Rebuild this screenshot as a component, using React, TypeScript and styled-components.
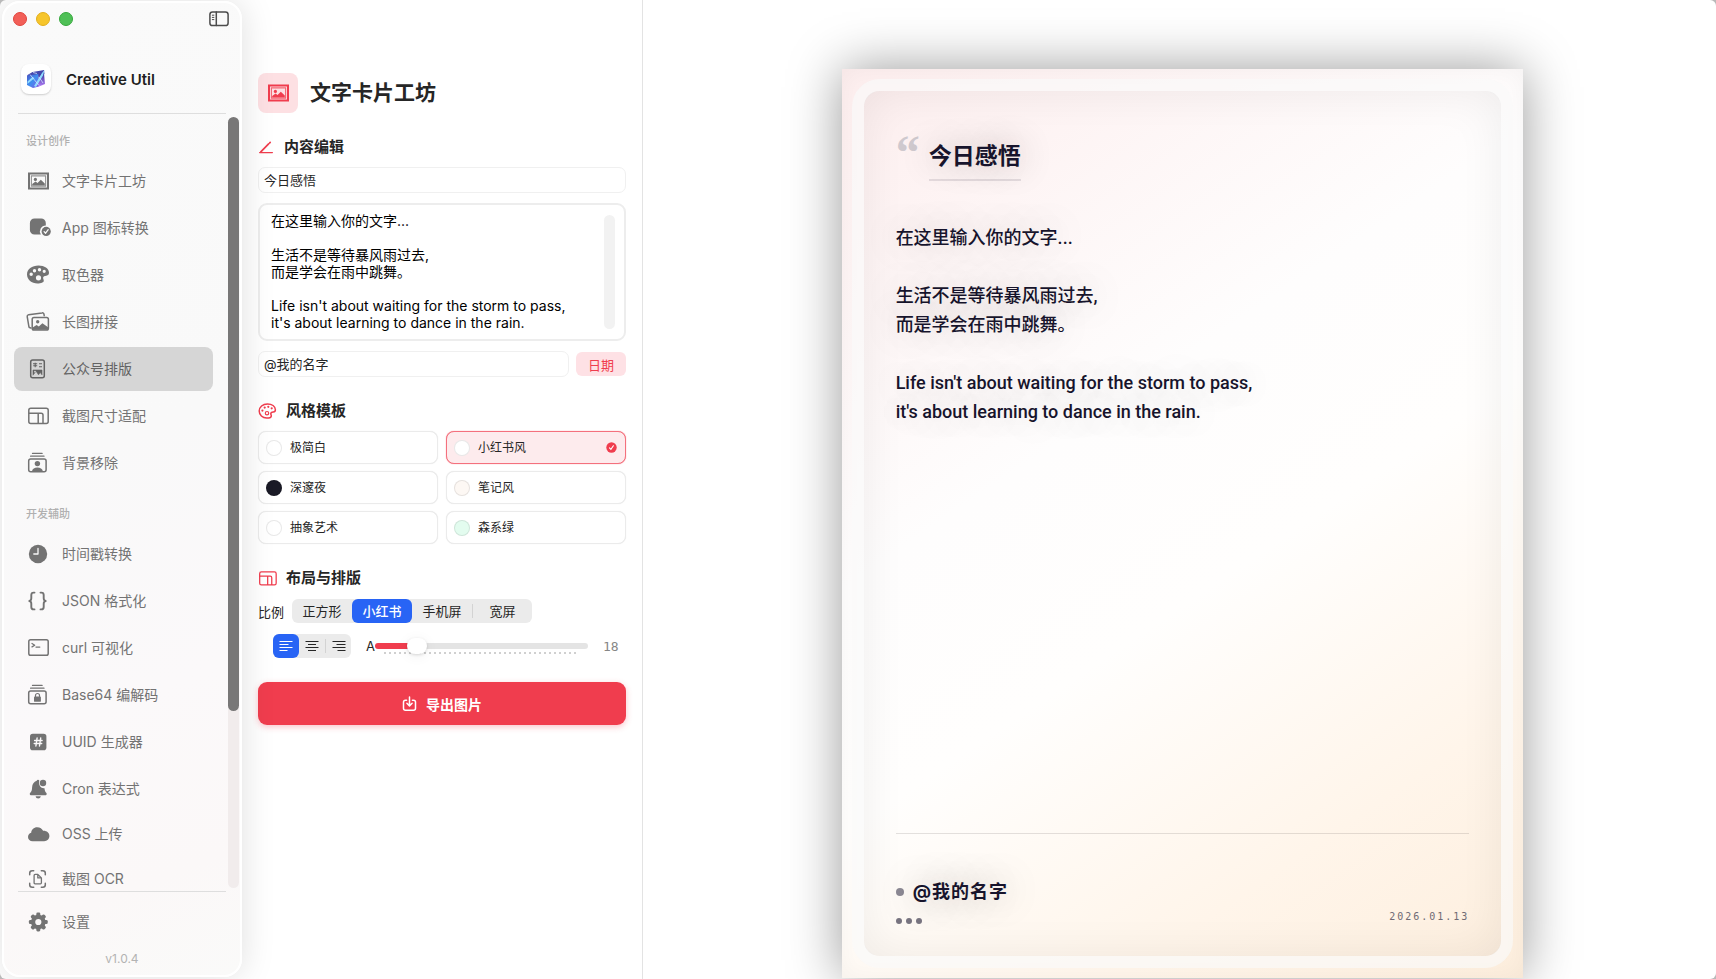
import React, { useState } from "react";
import styled, { createGlobalStyle, css } from "styled-components";

const RED = "#f03d4e";
const BLUE = "#2864f5";
const INK = "#17142c";

const Global = createGlobalStyle`
  * { box-sizing: border-box; }
  html, body, #root { height: 100%; }
  body {
    margin: 0;
    background: #b9b9b9;
    color: #262626;
    font-family: Inter, "Noto Sans CJK SC", sans-serif;
    font-size: 13px;
    -webkit-font-smoothing: antialiased;
  }
  button, input, textarea { font-family: inherit; color: inherit; margin: 0; }
  button { border: 0; padding: 0; background: none; cursor: pointer; }
  h1, h2, p, ul { margin: 0; padding: 0; }
`;

const Window = styled.div`
  display: flex;
  height: 100vh;
  min-height: 700px;
  background: #fff;
  border-radius: 6px;
  overflow: hidden;
`;

/* ---------- sidebar ---------- */

const Sidebar = styled.aside`
  display: flex;
  flex-direction: column;
  flex: none;
  width: 240px;
  margin: 1px 0 2px 2px;
  border: 2px solid #fff;
  border-radius: 18px;
  background: linear-gradient(160deg, #fafafa 0%, #f9f9f9 45%, #fbf9fa 70%, #fbf8f8 88%, #fafaf9 100%);
  box-shadow: 0 0 34px rgba(0, 0, 0, 0.13);
  z-index: 1;
`;

const TitleBar = styled.div`
  display: flex;
  align-items: center;
  height: 32px;
  padding: 0 11px 0 9px;
  gap: 9px;
`;

const Light = styled.button<{ $fill: string; $edge: string }>`
  width: 14px;
  height: 14px;
  border-radius: 50%;
  background: ${(p) => p.$fill};
  border: 1px solid ${(p) => p.$edge};
`;

const ToggleButton = styled.button`
  display: flex;
  margin-left: auto;
  color: #4c4c4c;
`;

const Brand = styled.div`
  display: flex;
  align-items: center;
  gap: 15px;
  margin: 0 14px;
  padding: 29px 3px 19px;
  border-bottom: 1px solid #dedede;
  font-size: 15px;
  font-weight: 600;
  color: #1f1f1f;
`;

const BrandMark = styled.span`
  display: grid;
  place-items: center;
  width: 30px;
  height: 30px;
  border-radius: 8px;
  background: #fff;
  box-shadow: 0 1px 2px rgba(0, 0, 0, 0.18);
`;

const NavScroll = styled.div`
  display: flex;
  flex: 1;
  min-height: 0;
`;

const NavList = styled.nav`
  display: flex;
  flex-direction: column;
  gap: 21px;
  flex: 1;
  padding: 19px 15px 0 10px;
  overflow: hidden;
`;

const NavGroup = styled.section`
  display: flex;
  flex-direction: column;
  gap: 3px;
  flex: none;
`;

const NavHeading = styled.h2`
  margin: 0 12px 7px;
  font-size: 11px;
  line-height: 16px;
  font-weight: 500;
  color: #b0b0b0;
`;

const NavButton = styled.button<{ $active?: boolean; $short?: boolean }>`
  display: flex;
  align-items: center;
  gap: 13px;
  width: 100%;
  height: ${(p) => (p.$short ? 40 : 44)}px;
  padding: 0 13px;
  border-radius: 8px;
  background: ${(p) => (p.$active ? "#d6d6d6" : "transparent")};
  color: ${(p) => (p.$active ? "#636363" : "#737373")};
  font-size: 14px;
  line-height: 20px;
  white-space: nowrap;
  svg { flex: none; overflow: visible; }
`;

const ScrollTrack = styled.div`
  width: 11px;
  margin: 3px 1px 3px 0;
  border-radius: 6px;
  background: #f1ecec;
`;

const ScrollThumb = styled.div`
  height: 77%;
  border-radius: 6px;
  background: #787777;
`;

const SidebarFooter = styled.div`
  margin: 0 14px;
  padding: 8px 0;
  border-top: 1px solid #dedede;
  ${NavButton} { padding: 0 9px; }
`;

const Version = styled.p`
  margin: 7px 0 0;
  font-size: 12px;
  line-height: 16px;
  text-align: center;
  color: #b3b3b3;
`;

/* ---------- editor ---------- */

const Editor = styled.main`
  display: flex;
  flex-direction: column;
  gap: 24px;
  flex: none;
  width: 401px;
  padding: 73px 16px 0;
  border-right: 1px solid #e3e3e3;
`;

const EditorHeader = styled.header`
  display: flex;
  align-items: center;
  gap: 12px;
  height: 40px;
`;

const HeaderBadge = styled.span`
  display: grid;
  place-items: center;
  width: 40px;
  height: 40px;
  border-radius: 8px;
  background: #fde0e3;
  color: ${RED};
`;

const Title = styled.h1`
  font-size: 21px;
  line-height: 30px;
  font-weight: 700;
`;

const Section = styled.section<{ $gap?: number }>`
  display: flex;
  flex-direction: column;
  gap: ${(p) => p.$gap ?? 10}px;
`;

const SectionTitle = styled.h2`
  display: flex;
  align-items: center;
  gap: 9px;
  font-size: 15px;
  line-height: 20px;
  font-weight: 600;
  svg { color: ${RED}; }
`;

const TextField = styled.input`
  flex: 1;
  min-width: 0;
  min-height: 26px;
  padding: 0 5px;
  border: 1px solid #f0f0f0;
  border-radius: 7px;
  background: #fff;
  font-size: 13px;
  line-height: 20px;
  outline: none;
`;

const AreaFrame = styled.div`
  display: flex;
  height: 138px;
  padding: 7px 9px 7px 11px;
  border: 2px solid #ededed;
  border-radius: 9px;
  background: #fff;
`;

const Area = styled.textarea`
  flex: 1;
  padding: 0;
  border: 0;
  outline: none;
  resize: none;
  overflow: hidden;
  background: none;
  color: #000;
  font-size: 14px;
  line-height: 17px;
`;

const AreaScroll = styled.div`
  width: 11px;
  margin: 3px 0;
  border-radius: 6px;
  background: #f2f2f2;
`;

const FieldRow = styled.div`
  display: flex;
  gap: 7px;
`;

const DateButton = styled.button`
  align-self: center;
  width: 50px;
  height: 24px;
  border-radius: 6px;
  background: #fee1e5;
  color: ${RED};
  font-size: 13px;
`;

const StyleGrid = styled.div`
  display: grid;
  grid-template-columns: 1fr 1fr;
  gap: 7px 8px;
`;

const StyleCard = styled.button<{ $active: boolean }>`
  display: flex;
  align-items: center;
  gap: 8px;
  height: 33px;
  padding: 0 7px;
  border: 1px solid ${(p) => (p.$active ? "#f4707d" : "#ebebeb")};
  box-shadow: 0 0 1px ${(p) => (p.$active ? "#f4707d" : "#e4e4e4")};
  border-radius: 8px;
  background: ${(p) => (p.$active ? "#fdebed" : "#fff")};
  font-size: 12px;
  line-height: 18px;
  svg { margin: 0 1px 0 auto; }
`;

const Swatch = styled.span<{ $color: string }>`
  width: 16px;
  height: 16px;
  border-radius: 50%;
  border: 1px solid rgba(0, 0, 0, 0.09);
  background: ${(p) => p.$color};
`;

const ControlRow = styled.div<{ $indent?: boolean }>`
  display: flex;
  align-items: center;
  gap: ${(p) => (p.$indent ? 15 : 8)}px;
  padding-left: ${(p) => (p.$indent ? 15 : 0)}px;
  font-size: 13px;
`;

const Segmented = styled.div`
  display: flex;
  height: 24px;
  border-radius: 6px;
  background: #ebebeb;
`;

const Segment = styled.button<{ $active: boolean; $narrow?: boolean; $rule?: boolean }>`
  display: flex;
  align-items: center;
  justify-content: center;
  width: ${(p) => (p.$narrow ? 26 : 60)}px;
  border-radius: 6px;
  font-size: 13px;
  line-height: 20px;
  font-weight: 400;
  ${(p) =>
    p.$active &&
    css`
      background: ${BLUE};
      color: #fff;
      font-weight: 500;
    `}
  ${(p) =>
    p.$rule &&
    css`
      &::before {
        content: "";
        width: 1px;
        height: 14px;
        margin-right: auto;
        background: #d3d3d3;
      }
      &::after {
        content: "";
        margin-right: auto;
      }
    `}
`;

const SizeControl = styled.label`
  display: flex;
  align-items: center;
  flex: 1;
`;

const Range = styled.input`
  appearance: none;
  flex: 1;
  min-width: 0;
  height: 24px;
  margin: 0;
  background: repeating-linear-gradient(90deg, #d0d0d0 0 2px, transparent 2px 5px) 9px 18px / calc(100% - 18px) 2px no-repeat;
  outline: none;
  &::-webkit-slider-runnable-track {
    height: 6px;
    border-radius: 3px;
    background: linear-gradient(90deg, ${RED} var(--fill), #e4e4e4 var(--fill));
  }
  &::-webkit-slider-thumb {
    appearance: none;
    width: 20px;
    height: 16px;
    margin-top: -5px;
    border-radius: 8px;
    background: #fff;
    box-shadow: 0 1px 3px rgba(0, 0, 0, 0.14), 0 2px 14px rgba(0, 0, 0, 0.06);
  }
`;

const SizeValue = styled.output`
  width: 23px;
  font-family: "DejaVu Sans Mono", monospace;
  font-size: 13px;
  color: #868686;
`;

const ExportButton = styled.button`
  display: flex;
  align-items: center;
  justify-content: center;
  gap: 9px;
  height: 43px;
  border-radius: 9px;
  background: ${RED};
  box-shadow: 0 2px 6px rgba(240, 61, 78, 0.3);
  color: #fff;
  font-size: 14px;
  font-weight: 700;
`;

/* ---------- preview ---------- */

const Preview = styled.section`
  display: flex;
  justify-content: center;
  align-items: flex-start;
  flex: 1;
  min-width: 0;
  padding: 69px 0 1px 6px;
`;

const Card = styled.article`
  display: flex;
  flex: none;
  height: calc(100vh - 70px);
  min-height: 630px;
  aspect-ratio: 3 / 4;
  padding: 10px;
  background: linear-gradient(146deg, #fdeeee 0%, #fefdfd 38%, #fffefd 56%, #fff5ea 80%, #fdeedd 100%);
  box-shadow: 0 0 50px rgba(0, 0, 0, 0.4), inset 0 0 24px rgba(0, 0, 0, 0.04);
`;

const CardFrame = styled.div`
  display: flex;
  flex: 1;
  border: 12px solid rgba(249, 249, 249, 0.68);
  border-radius: 28px;
`;

const CardBody = styled.div`
  display: flex;
  flex-direction: column;
  flex: 1;
  padding: 40px 32px 32px;
  border-radius: 15px;
  box-shadow: inset 0 0 46px rgba(0, 0, 0, 0.065);
  color: ${INK};
`;

const CardHeading = styled.header`
  display: flex;
  align-items: flex-start;
  gap: 9px;
`;

const QuoteMark = styled.span`
  font-family: "Liberation Serif", serif;
  font-weight: 700;
  font-size: 48px;
  line-height: 44px;
  color: #cfc9ce;
`;

const CardTitle = styled.h2`
  padding: 8px 0 6px;
  border-bottom: 2px solid rgba(23, 20, 44, 0.11);
  font-size: 23px;
  line-height: 34px;
  font-weight: 700;
  text-shadow: 0 0 34px rgba(40, 30, 30, 0.3);
`;

const CardText = styled.p`
  margin-top: 42px;
  flex: 1;
  font-family: Roboto, "Noto Sans CJK SC", sans-serif;
  font-size: 18px;
  line-height: 29px;
  font-weight: 500;
  white-space: pre-wrap;
  text-shadow: 0 0 36px rgba(50, 40, 40, 0.26);
`;

const CardFooter = styled.footer`
  display: flex;
  align-items: flex-end;
  justify-content: space-between;
  padding-top: 44px;
  border-top: 1px solid rgba(60, 50, 50, 0.14);
`;

const Signature = styled.div`
  display: flex;
  flex-direction: column;
  gap: 12px;
`;

const Author = styled.div`
  display: flex;
  align-items: center;
  gap: 9px;
  font-size: 18px;
  line-height: 28px;
  font-weight: 700;
  letter-spacing: 1px;
  text-shadow: 0 0 34px rgba(50, 40, 40, 0.35);
`;

const DotRow = styled.div`
  display: flex;
  gap: 4px;
`;

const Dot = styled.span<{ $size: number; $color: string }>`
  width: ${(p) => p.$size}px;
  height: ${(p) => p.$size}px;
  border-radius: 50%;
  background: ${(p) => p.$color};
`;

const CardDate = styled.time`
  font-family: "DejaVu Sans Mono", monospace;
  font-size: 10px;
  line-height: 14px;
  letter-spacing: 2px;
  color: #6f6a73;
`;

/* ---------- icons ---------- */

const Icon = ({ children, w = 22, h = 20 }: { children: React.ReactNode; w?: number; h?: number }) => (
  <svg
    width={w}
    height={h}
    viewBox={`0 0 ${w} ${h}`}
    fill="none"
    stroke="currentColor"
    strokeWidth="1.5"
    strokeLinecap="round"
    strokeLinejoin="round"
    aria-hidden="true"
  >
    {children}
  </svg>
);

const FrameIcon = () => (
  <Icon>
    <path d="M1 1.5h21v17H1z M3 3.5v13h17v-13z" fill="currentColor" fillRule="evenodd" stroke="none" />
    <path d="M4.4 4.9h14.2v10.2H4.4z" strokeWidth="1.1" opacity="0.75" strokeLinejoin="miter" />
    <circle cx="8.4" cy="8.4" r="1.6" fill="currentColor" stroke="none" />
    <path d="M5.2 14.6v-1.5l3.4-2.5 1.9 1.4 3.3-3.2 4 3.6v2.2z" fill="currentColor" stroke="none" />
  </Icon>
);

const AppCheckIcon = () => (
  <Icon>
    <path d="M7.5 0.5h6.7a4.6 4.6 0 0 1 4.6 4.6v2.3a5.9 5.9 0 0 0-4.9 9.1H7.5a4.6 4.6 0 0 1-4.6-4.6V5.1a4.6 4.6 0 0 1 4.6-4.6z" fill="currentColor" stroke="none" />
    <circle cx="19.2" cy="13.4" r="4.6" fill="currentColor" stroke="none" />
    <path d="M17.1 13.6l1.5 1.6 2.6-3.5" stroke="#f9f9f9" strokeWidth="1.3" />
  </Icon>
);

const PaletteIcon = () => (
  <Icon>
    <path
      d="M11.5 .5C5 .5 0 4.2 0 9.500c0 5 4.600 9 10.500 9 3.600 0 6.300-1 6.300-2.700 0-1.300-.7-1.800-.7-3 0-1.500 1.500-2 3.300-2.100C21.300 10.600 22 9.300 22 7.800 22 3.500 17.400 .5 11.500 .5z
         M4.200 7.600a1.700 1.700 0 1 0 0 3.400 1.700 1.700 0 0 0 0-3.400z
         M7.500 4a1.700 1.700 0 1 0 0 3.400 1.700 1.700 0 0 0 0-3.400z
         M12.500 3a1.700 1.700 0 1 0 0 3.400 1.700 1.700 0 0 0 0-3.400z
         M17.200 4.700a1.600 1.600 0 1 0 0 3.200 1.600 1.600 0 0 0 0-3.200z
         M11.500 10.200a2.600 2.600 0 1 0 0 5.200 2.600 2.600 0 0 0 0-5.200z"
      fill="currentColor"
      fillRule="evenodd"
      stroke="none"
    />
  </Icon>
);

const PhotosIcon = () => (
  <Icon>
    <path d="M3.900 16l-.9-.2a1.400 1.400 0 0 1-1.100-1.200L.2 4.600A1.700 1.700 0 0 1 1.600 2.700L15 .9a1.700 1.700 0 0 1 2 1.400l.2 1.400" />
    <rect x="5.200" y="5.400" width="16.200" height="12.700" rx="1.800" />
    <circle cx="10.700" cy="9.800" r="1.700" fill="currentColor" stroke="none" />
    <path d="M5.600 15.500l4-2.400 2.200 1.300 3.600-3.100 5.700 4v2.500H5.600z" fill="currentColor" stroke="none" />
  </Icon>
);

const ArticleIcon = () => (
  <Icon>
    <rect x="3.700" y="1" width="13.600" height="17.800" rx="2" />
    <path d="M6 4.700h4.200M8.200 3.700v4.500M6.200 6.700h4M12 4.700h3M12 7.700h3" strokeWidth="1.100" strokeLinecap="butt" />
    <path d="M6 15.800v-4.800h9v4.800l-1.800-2.300-1.700 2.300-2.200-3.300z" fill="currentColor" strokeWidth="0.600" />
    <circle cx="8" cy="12.700" r=".9" fill="#d6d6d6" stroke="none" />
  </Icon>
);

const LayoutIcon = ({ w = 22, h = 20 }: { w?: number; h?: number }) => (
  <svg width={w} height={h} viewBox="0 0 22 20" fill="none" stroke="currentColor" strokeWidth="1.500" aria-hidden="true">
    <rect x="1.800" y="2.300" width="19.400" height="15.200" rx="2" />
    <path d="M1.800 7.200h12.400a1.800 1.800 0 0 1 1.800 1.800v8.500M11.200 7.200v10.300" />
  </svg>
);

const PersonStackIcon = () => (
  <Icon>
    <path d="M5.500 .4h9.600M3.600 3.200h13.400" strokeWidth="1.300" />
    <rect x="1.700" y="6" width="17.400" height="12.700" rx="2" />
    <circle cx="10.400" cy="10.600" r="2.700" fill="currentColor" stroke="none" />
    <path d="M5 18.100c.4-2.600 2.600-3.700 5.400-3.700s5 1.100 5.400 3.700z" fill="currentColor" stroke="none" />
  </Icon>
);

const ClockIcon = () => (
  <Icon>
    <circle cx="11" cy="10" r="9.200" fill="currentColor" stroke="none" />
    <path d="M11 4.500V10H6.800" stroke="#f9f9f9" strokeWidth="1.300" />
  </Icon>
);

const BracesIcon = () => (
  <Icon>
    <path
      d="M7.500 1.600H6.600C5 1.600 4.300 2.400 4.300 4v3.300c0 1.500-.6 2.400-2 2.700 1.400.3 2 1.200 2 2.700V16c0 1.600.7 2.400 2.300 2.400h.9
         M13.500 1.600h.9c1.600 0 2.300.8 2.300 2.400v3.300c0 1.500.6 2.400 2 2.700-1.400.3-2 1.200-2 2.700V16c0 1.600-.7 2.400-2.300 2.400h-.9"
      strokeWidth="1.900"
    />
  </Icon>
);

const TerminalIcon = () => (
  <Icon>
    <rect x="1.800" y="1.800" width="19.400" height="15.400" rx="1.800" />
    <path d="M5 5.500l2.700 1.700L5 8.900M9 9.100h3.800" strokeWidth="1.300" />
  </Icon>
);

const LockStackIcon = () => (
  <Icon>
    <path d="M5.500 .4h9.600M3.600 3.200h13.400" strokeWidth="1.300" />
    <rect x="1.700" y="6" width="17.400" height="12.700" rx="2" />
    <rect x="7" y="11.500" width="6.900" height="5.300" rx="0.900" fill="currentColor" stroke="none" />
    <path d="M8.500 11.500v-1a2 2 0 0 1 4 0v1" strokeWidth="1.200" />
  </Icon>
);

const HashIcon = () => (
  <Icon>
    <rect x="3" y="1.800" width="16.400" height="16.400" rx="2.800" fill="currentColor" stroke="none" />
    <path d="M10.100 6l-1.200 8M13.700 6l-1.200 8M7.600 8.500h7.500M7.200 11.500h7.500" stroke="#fbf9fa" strokeWidth="1.400" />
  </Icon>
);

const BellIcon = () => (
  <Icon>
    <path d="M12.300 1.600c-.5-1-2.200-1-2.600.1C6.800 2.700 5.300 5.200 5.100 8.200c-.1 3-.6 4.300-1.800 5.600-1.100 1.100-.4 2.400.5 2.400h14.900c.9 0 1.500-1.300.5-2.400-1-1.100-1.500-2.200-1.700-4.500-3.500.4-6.200-2.700-5.200-7.700z" fill="currentColor" stroke="none" />
    <circle cx="16" cy="4" r="3.200" fill="currentColor" stroke="none" />
    <path d="M8.600 17.300h5.200c-.3 1.400-1.300 2.200-2.600 2.200s-2.300-.8-2.600-2.200z" fill="currentColor" stroke="none" />
  </Icon>
);

const CloudIcon = () => (
  <Icon>
    <path d="M5.600 17.200C3 17.200 1 15.400 1 12.900c0-2.100 1.400-3.600 3.200-4.100C4.200 5.700 6.800 3.200 10.200 3.200c2.900 0 4.900 1.500 5.900 3.600 3.600-.2 6.300 2 6.300 5.200 0 3-2.300 5.200-5.200 5.200z" fill="currentColor" stroke="none" />
  </Icon>
);

const ScanDocIcon = () => (
  <Icon>
    <path d="M2.700 5.700V4.200c0-1.500 1-2.500 2.500-2.500h1.500M14.300 1.700h1.500c1.500 0 2.500 1 2.500 2.500v1.500M18.300 14.300v1.500c0 1.500-1 2.500-2.500 2.500h-1.500M6.700 18.300H5.200c-1.500 0-2.500-1-2.500-2.500v-1.500" />
    <path d="M7.100 6.400c0-.6.400-1 1-1h2.700l3.600 3.500v4.900c0 .6-.4 1-1 1H8.100c-.6 0-1-.4-1-1z M10.800 5.600v3.300h3.400" strokeWidth="1.300" />
  </Icon>
);

const teeth = Array.from({ length: 8 }, (_, i) => i * 45);
const GearIcon = () => (
  <Icon>
    <circle cx="11.300" cy="10" r="5.200" strokeWidth="4.200" />
    {teeth.map((a) => (
      <rect key={a} x="9.300" y="0.600" width="4" height="4" rx="1.300" fill="currentColor" stroke="none" transform={`rotate(${a} 11.300 10)`} />
    ))}
  </Icon>
);

const SidebarToggleIcon = () => (
  <Icon w={20} h={16}>
    <rect x="0.900" y="1" width="18.200" height="13.600" rx="2.600" />
    <path d="M7.300 1v13.600" />
    <path d="M3.300 4.200h1.600M3.300 6.400h1.600M3.300 8.600h1.600" strokeWidth="1" />
  </Icon>
);

const LogoArt = () => (
  <svg width="20" height="20" viewBox="0 0 20 20" aria-hidden="true">
    <defs>
      <linearGradient id="logo-front" x1="0" y1="0" x2="1" y2="1">
        <stop offset="0" stopColor="#4a57c8" />
        <stop offset="0.500" stopColor="#3f8ff0" />
        <stop offset="1" stopColor="#8b4fe0" />
      </linearGradient>
      <linearGradient id="logo-side" x1="0" y1="0" x2="0" y2="1">
        <stop offset="0" stopColor="#3b3a9c" />
        <stop offset="1" stopColor="#b07cf5" />
      </linearGradient>
    </defs>
    <path d="M1.500 6l5-3 6-1 5.500-1 .5 4-5 2.500L1.500 8z" fill="#4448ae" />
    <path d="M1 6.500l11.500-1.500.5 12.500L7 19l-6-3z" fill="url(#logo-front)" />
    <path d="M12.500 5L18 4.500l1 10.500-6 2.500z" fill="url(#logo-side)" />
    <path d="M1.500 12.500l5-4.500 2 1-7 6z M8 17l8-13 2.500-3-1.500 5.500L10 18z" fill="#8fdcff" />
    <path d="M4 5.500l9 11M13 8l4 6M7 3.500l4 1" stroke="#cfe4ff" strokeWidth="0.800" />
  </svg>
);

const PenIcon = () => (
  <Icon w={17} h={16}>
    <path d="M2.800 12.900l7.800-8M11.700 3.800l.5-.5" strokeWidth="1.700" />
    <path d="M1.600 13.600h12.800" strokeWidth="1.300" />
  </Icon>
);

const PaletteOutlineIcon = () => (
  <Icon w={19} h={16}>
    <path d="M9.500 .9C4.700 .9 1.200 4 1.200 8s3.300 7 7.500 7c2.700 0 4.600-.7 4.600-2.100 0-1-.5-1.300-.5-2.200 0-1.100 1.100-1.500 2.500-1.600 1.400-.1 2.100-1 2.100-2.300C17.400 3.200 13.900 .9 9.500 .9z" strokeWidth="1.500" />
    <g fill="currentColor" stroke="none">
      <circle cx="4.400" cy="7.600" r="1.100" />
      <circle cx="6.700" cy="4.600" r="1.100" />
      <circle cx="10.300" cy="3.800" r="1.100" />
      <circle cx="13.700" cy="5.300" r="1.100" />
    </g>
    <circle cx="9" cy="10.200" r="1.700" strokeWidth="1.200" />
  </Icon>
);

const CheckBadge = () => (
  <svg width="11" height="11" viewBox="0 0 11 11" aria-hidden="true">
    <circle cx="5.500" cy="5.500" r="5.200" fill={RED} />
    <path d="M3.500 5.800l1.400 1.500 2.500-3.500" fill="none" stroke="#fff" strokeWidth="1.100" strokeLinecap="round" />
  </svg>
);

const alignPaths: Record<string, string> = {
  left: "M.5 1.500h13M.5 4.500h9M.5 7.500h13M.5 10.500h8",
  center: "M.5 1.500h13M3 4.500h8M.5 7.500h13M3 10.500h8",
  right: "M.5 1.500h13M4.500 4.500h9M.5 7.500h13M5.500 10.500h8",
};

const AlignIcon = ({ kind }: { kind: string }) => (
  <svg width="14" height="12" viewBox="0 0 14 12" fill="none" stroke="currentColor" strokeWidth="1.100" aria-hidden="true">
    <path d={alignPaths[kind]} />
  </svg>
);

const ExportIcon = () => (
  <Icon w={15} h={16}>
    <path d="M4.600 4.200H3.500a2 2 0 0 0-2 2v6a2 2 0 0 0 2 2h8a2 2 0 0 0 2-2v-6a2 2 0 0 0-2-2h-1.100" />
    <path d="M7.500 .9v8.800M4.900 7.300l2.600 2.600 2.600-2.600" />
  </Icon>
);

/* ---------- data ---------- */

type NavEntry = { label: string; icon: React.ReactNode; short?: boolean };

const navGroups: { title: string; items: NavEntry[] }[] = [
  {
    title: "设计创作",
    items: [
      { label: "文字卡片工坊", icon: <FrameIcon /> },
      { label: "App 图标转换", icon: <AppCheckIcon /> },
      { label: "取色器", icon: <PaletteIcon /> },
      { label: "长图拼接", icon: <PhotosIcon /> },
      { label: "公众号排版", icon: <ArticleIcon /> },
      { label: "截图尺寸适配", icon: <LayoutIcon /> },
      { label: "背景移除", icon: <PersonStackIcon /> },
    ],
  },
  {
    title: "开发辅助",
    items: [
      { label: "时间戳转换", icon: <ClockIcon /> },
      { label: "JSON 格式化", icon: <BracesIcon /> },
      { label: "curl 可视化", icon: <TerminalIcon /> },
      { label: "Base64 编解码", icon: <LockStackIcon /> },
      { label: "UUID 生成器", icon: <HashIcon /> },
      { label: "Cron 表达式", icon: <BellIcon /> },
      { label: "OSS 上传", icon: <CloudIcon />, short: true },
      { label: "截图 OCR", icon: <ScanDocIcon /> },
    ],
  },
];

const styles = [
  { name: "极简白", color: "#ffffff" },
  { name: "小红书风", color: "#ffffff" },
  { name: "深邃夜", color: "#1a1a26" },
  { name: "笔记风", color: "#fdf8f4" },
  { name: "抽象艺术", color: "#ffffff" },
  { name: "森系绿", color: "#e3fcef" },
];

const ratios = ["正方形", "小红书", "手机屏", "宽屏"];
const aligns = [
  { kind: "left", label: "左对齐" },
  { kind: "center", label: "居中" },
  { kind: "right", label: "右对齐" },
];

const initialText = `在这里输入你的文字...

生活不是等待暴风雨过去,
而是学会在雨中跳舞。

Life isn't about waiting for the storm to pass,
it's about learning to dance in the rain.`;

export default function App() {
  const [page, setPage] = useState("公众号排版");
  const [title, setTitle] = useState("今日感悟");
  const [text, setText] = useState(initialText);
  const [author, setAuthor] = useState("@我的名字");
  const [showDate, setShowDate] = useState(true);
  const [style, setStyle] = useState("小红书风");
  const [ratio, setRatio] = useState("小红书");
  const [align, setAlign] = useState("left");
  const [size, setSize] = useState(18);
  const fill = { "--fill": `${((size - 12) / 36) * 100}%` } as React.CSSProperties;

  return (
    <>
      <Global />
      <Window>
        <Sidebar>
          <TitleBar>
            <Light $fill="#f25f58" $edge="#e2443d" aria-label="关闭" />
            <Light $fill="#f6c52b" $edge="#e3ae1b" aria-label="最小化" />
            <Light $fill="#4fc057" $edge="#35a83c" aria-label="缩放" />
            <ToggleButton aria-label="切换侧边栏">
              <SidebarToggleIcon />
            </ToggleButton>
          </TitleBar>
          <Brand>
            <BrandMark>
              <LogoArt />
            </BrandMark>
            Creative Util
          </Brand>
          <NavScroll>
            <NavList>
              {navGroups.map((group) => (
                <NavGroup key={group.title}>
                  <NavHeading>{group.title}</NavHeading>
                  {group.items.map((item) => (
                    <NavButton
                      key={item.label}
                      $active={item.label === page}
                      $short={item.short}
                      onClick={() => setPage(item.label)}
                    >
                      {item.icon}
                      {item.label}
                    </NavButton>
                  ))}
                </NavGroup>
              ))}
            </NavList>
            <ScrollTrack>
              <ScrollThumb />
            </ScrollTrack>
          </NavScroll>
          <SidebarFooter>
            <NavButton>
              <GearIcon />
              设置
            </NavButton>
            <Version>v1.0.4</Version>
          </SidebarFooter>
        </Sidebar>

        <Editor>
          <EditorHeader>
            <HeaderBadge>
              <FrameIcon />
            </HeaderBadge>
            <Title>文字卡片工坊</Title>
          </EditorHeader>

          <Section>
            <SectionTitle>
              <PenIcon />
              内容编辑
            </SectionTitle>
            <TextField aria-label="标题" value={title} onChange={(e) => setTitle(e.target.value)} />
            <AreaFrame>
              <Area aria-label="正文" value={text} onChange={(e) => setText(e.target.value)} />
              <AreaScroll />
            </AreaFrame>
            <FieldRow>
              <TextField aria-label="署名" value={author} onChange={(e) => setAuthor(e.target.value)} />
              <DateButton aria-pressed={showDate} onClick={() => setShowDate(!showDate)}>
                日期
              </DateButton>
            </FieldRow>
          </Section>

          <Section>
            <SectionTitle>
              <PaletteOutlineIcon />
              风格模板
            </SectionTitle>
            <StyleGrid>
              {styles.map((s) => (
                <StyleCard key={s.name} $active={s.name === style} onClick={() => setStyle(s.name)}>
                  <Swatch $color={s.color} />
                  {s.name}
                  {s.name === style && <CheckBadge />}
                </StyleCard>
              ))}
            </StyleGrid>
          </Section>

          <Section $gap={11}>
            <SectionTitle>
              <LayoutIcon w={19} h={17} />
              布局与排版
            </SectionTitle>
            <ControlRow>
              比例
              <Segmented role="group" aria-label="比例">
                {ratios.map((r, i) => (
                  <Segment
                    key={r}
                    $active={r === ratio}
                    $rule={i > 0 && r !== ratio && ratios[i - 1] !== ratio}
                    onClick={() => setRatio(r)}
                  >
                    {r}
                  </Segment>
                ))}
              </Segmented>
            </ControlRow>
            <ControlRow $indent>
              <Segmented role="group" aria-label="对齐">
                {aligns.map((a, i) => (
                  <Segment
                    key={a.kind}
                    $narrow
                    $active={a.kind === align}
                    $rule={i > 0 && a.kind !== align && aligns[i - 1].kind !== align}
                    aria-label={a.label}
                    onClick={() => setAlign(a.kind)}
                  >
                    <AlignIcon kind={a.kind} />
                  </Segment>
                ))}
              </Segmented>
              <SizeControl>
                A
                <Range
                  type="range"
                  min={12}
                  max={48}
                  value={size}
                  style={fill}
                  onChange={(e) => setSize(Number(e.target.value))}
                />
              </SizeControl>
              <SizeValue>{size}</SizeValue>
            </ControlRow>
          </Section>

          <ExportButton>
            <ExportIcon />
            导出图片
          </ExportButton>
        </Editor>

        <Preview>
          <Card>
            <CardFrame>
              <CardBody>
                <CardHeading>
                  <QuoteMark>“</QuoteMark>
                  <CardTitle>{title}</CardTitle>
                </CardHeading>
                <CardText>{text}</CardText>
                <CardFooter>
                  <Signature>
                    <Author>
                      <Dot $size={8} $color="#8c8994" />
                      {author}
                    </Author>
                    <DotRow>
                      <Dot $size={6} $color="#77737f" />
                      <Dot $size={6} $color="#77737f" />
                      <Dot $size={6} $color="#77737f" />
                    </DotRow>
                  </Signature>
                  {showDate && <CardDate>2026.01.13</CardDate>}
                </CardFooter>
              </CardBody>
            </CardFrame>
          </Card>
        </Preview>
      </Window>
    </>
  );
}
